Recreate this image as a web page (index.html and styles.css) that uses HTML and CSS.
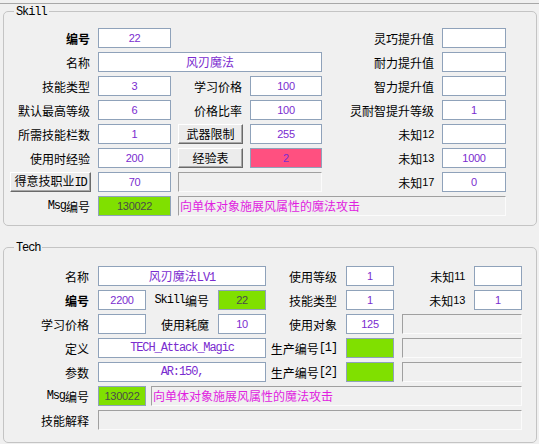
FILE: index.html
```html
<!DOCTYPE html>
<html lang="zh-CN">
<head>
  <meta charset="UTF-8">
  <title>技能编辑</title>
  <link rel="stylesheet" href="styles.css">
</head>
<body>
  <div class="top-edge"></div>

  <fieldset class="group">
    <legend><span class="mono">Skill</span></legend>
    <div class="skill-grid">
      <label class="lbl bold">编号</label>
      <div class="box num">22</div>
      <label class="lbl at-5">灵巧提升值</label>
      <div class="box"></div>

      <label class="lbl">名称</label>
      <div class="box cjk span-3">风刃魔法</div>
      <label class="lbl">耐力提升值</label>
      <div class="box"></div>

      <label class="lbl">技能类型</label>
      <div class="box num">3</div>
      <label class="lbl">学习价格</label>
      <div class="box num">100</div>
      <label class="lbl">智力提升值</label>
      <div class="box"></div>

      <label class="lbl">默认最高等级</label>
      <div class="box num">6</div>
      <label class="lbl">价格比率</label>
      <div class="box num">100</div>
      <label class="lbl">灵耐智提升等级</label>
      <div class="box num">1</div>

      <label class="lbl">所需技能栏数</label>
      <div class="box num">1</div>
      <button class="btn">武器限制</button>
      <div class="box num">255</div>
      <label class="lbl">未知<span class="digits">12</span></label>
      <div class="box"></div>

      <label class="lbl">使用时经验</label>
      <div class="box num">200</div>
      <button class="btn">经验表</button>
      <div class="box pink num">2</div>
      <label class="lbl">未知<span class="digits">13</span></label>
      <div class="box num">1000</div>

      <button class="btn">得意技职业<span class="mono">ID</span></button>
      <div class="box num">70</div>
      <div class="box sunken span-2"></div>
      <label class="lbl">未知<span class="digits">17</span></label>
      <div class="box num">0</div>

      <label class="lbl"><span class="mono">Msg</span>编号</label>
      <div class="box green num">130022</div>
      <div class="box sunken msg span-4">向单体对象施展风属性的魔法攻击</div>
    </div>
  </fieldset>

  <fieldset class="group tech">
    <legend><span class="mono">Tech</span></legend>
    <div class="tech-grid">
      <label class="lbl">名称</label>
      <div class="box cjk span-3">风刃魔法<span class="mono">LV1</span></div>
      <label class="lbl">使用等级</label>
      <div class="box num">1</div>
      <label class="lbl">未知<span class="digits">11</span></label>
      <div class="box"></div>

      <label class="lbl bold">编号</label>
      <div class="box num">2200</div>
      <label class="lbl"><span class="mono">Skill</span>编号</label>
      <div class="box green num">22</div>
      <label class="lbl">技能类型</label>
      <div class="box num">1</div>
      <label class="lbl">未知<span class="digits">13</span></label>
      <div class="box num">1</div>

      <label class="lbl">学习价格</label>
      <div class="box"></div>
      <label class="lbl">使用耗魔</label>
      <div class="box num">10</div>
      <label class="lbl">使用对象</label>
      <div class="box num">125</div>
      <div class="box sunken span-2"></div>

      <label class="lbl">定义</label>
      <div class="box mono-val span-3">TECH_Attack_Magic</div>
      <label class="lbl">生产编号<span class="mono">[1]</span></label>
      <div class="box green"></div>
      <div class="box sunken span-2"></div>

      <label class="lbl">参数</label>
      <div class="box mono-val span-3">AR:150,</div>
      <label class="lbl">生产编号<span class="mono">[2]</span></label>
      <div class="box green"></div>
      <div class="box sunken span-2"></div>

      <label class="lbl"><span class="mono">Msg</span>编号</label>
      <div class="box green num">130022</div>
      <div class="box sunken msg span-6 pull-left">向单体对象施展风属性的魔法攻击</div>

      <label class="lbl">技能解释</label>
      <div class="box sunken span-7"></div>
    </div>
  </fieldset>
</body>
</html>
```

FILE: styles.css
```css
body {
  margin: 0;
  background-color: #f0f0f0;
  font-family: "Noto Sans CJK SC", "Liberation Sans", sans-serif;
  font-size: 12px;
  color: #000;
}

.top-edge {
  height: 3px;
  border-bottom: 1px solid #a8a8a8;
}

.group {
  margin: 0 2px 0 3px;
  padding: 10px 0 9px 6px;
  border: 1px solid #c4c4c4;
  border-radius: 5px;
  min-width: 0;
}

.group.tech {
  margin-top: 14px;
  padding-top: 12px;
  padding-bottom: 12px;
}

.group legend {
  margin-left: 4px;
  padding: 0 2px;
  line-height: 12px;
}

.mono {
  font-family: "Liberation Mono", monospace;
  font-size: 12px;
  letter-spacing: -1.1px;
}

.digits {
  font-family: "Liberation Sans", sans-serif;
  font-size: 11px;
  letter-spacing: -0.3px;
}

.skill-grid {
  display: grid;
  grid-template-columns: 81px 73px 65px 72px 106px 64px;
  grid-auto-rows: 20px;
  column-gap: 7px;
  row-gap: 4px;
}

.tech-grid {
  display: grid;
  grid-template-columns: 80px 48px 56px 48px 64px 48px 64px 48px;
  grid-auto-rows: 20px;
  column-gap: 8px;
  row-gap: 4px;
}

.at-5 { grid-column-start: 5; }
.span-2 { grid-column: span 2; }
.span-3 { grid-column: span 3; }
.span-4 { grid-column: span 4; }
.span-6 { grid-column: span 6; }
.span-7 { grid-column: span 7; }

.lbl {
  display: flex;
  align-items: center;
  justify-content: flex-end;
  padding-right: 1px;
  white-space: nowrap;
}

.lbl.bold {
  font-weight: bold;
}

/* text boxes */
.box {
  box-sizing: border-box;
  height: 20px;
  line-height: 18px;
  border: 1px solid #8fa2ba;
  background-color: #fff;
  color: #7a2ccf;
  text-align: center;
  white-space: nowrap;
  overflow: hidden;
}

.box.num {
  font-family: "Liberation Sans", sans-serif;
  font-size: 11px;
  letter-spacing: -0.3px;
}

.box.mono-val {
  font-family: "Liberation Mono", monospace;
  font-size: 12px;
  letter-spacing: -1.1px;
}

.box.green {
  background-color: #80e000;
  color: #4a4a4a;
}

.box.pink {
  background-color: #ff5080;
}

.box.sunken {
  background-color: #f0f0f0;
  border-color: #a0a0a0 #fbfbfb #fbfbfb #a0a0a0;
}

.box.msg {
  color: #e01ee0;
  text-align: left;
  padding-left: 1px;
}

.pull-left {
  margin-left: -3px;
}

/* buttons */
.btn {
  box-sizing: border-box;
  height: 20px;
  padding: 0;
  font-family: "Noto Sans CJK SC", sans-serif;
  font-size: 12px;
  line-height: 16px;
  color: #000;
  background-color: #ececec;
  border: 1px solid;
  border-color: #fff #6a6a6a #6a6a6a #fff;
  box-shadow: inset -1px -1px 0 #a8a8a8;
  white-space: nowrap;
}
```
